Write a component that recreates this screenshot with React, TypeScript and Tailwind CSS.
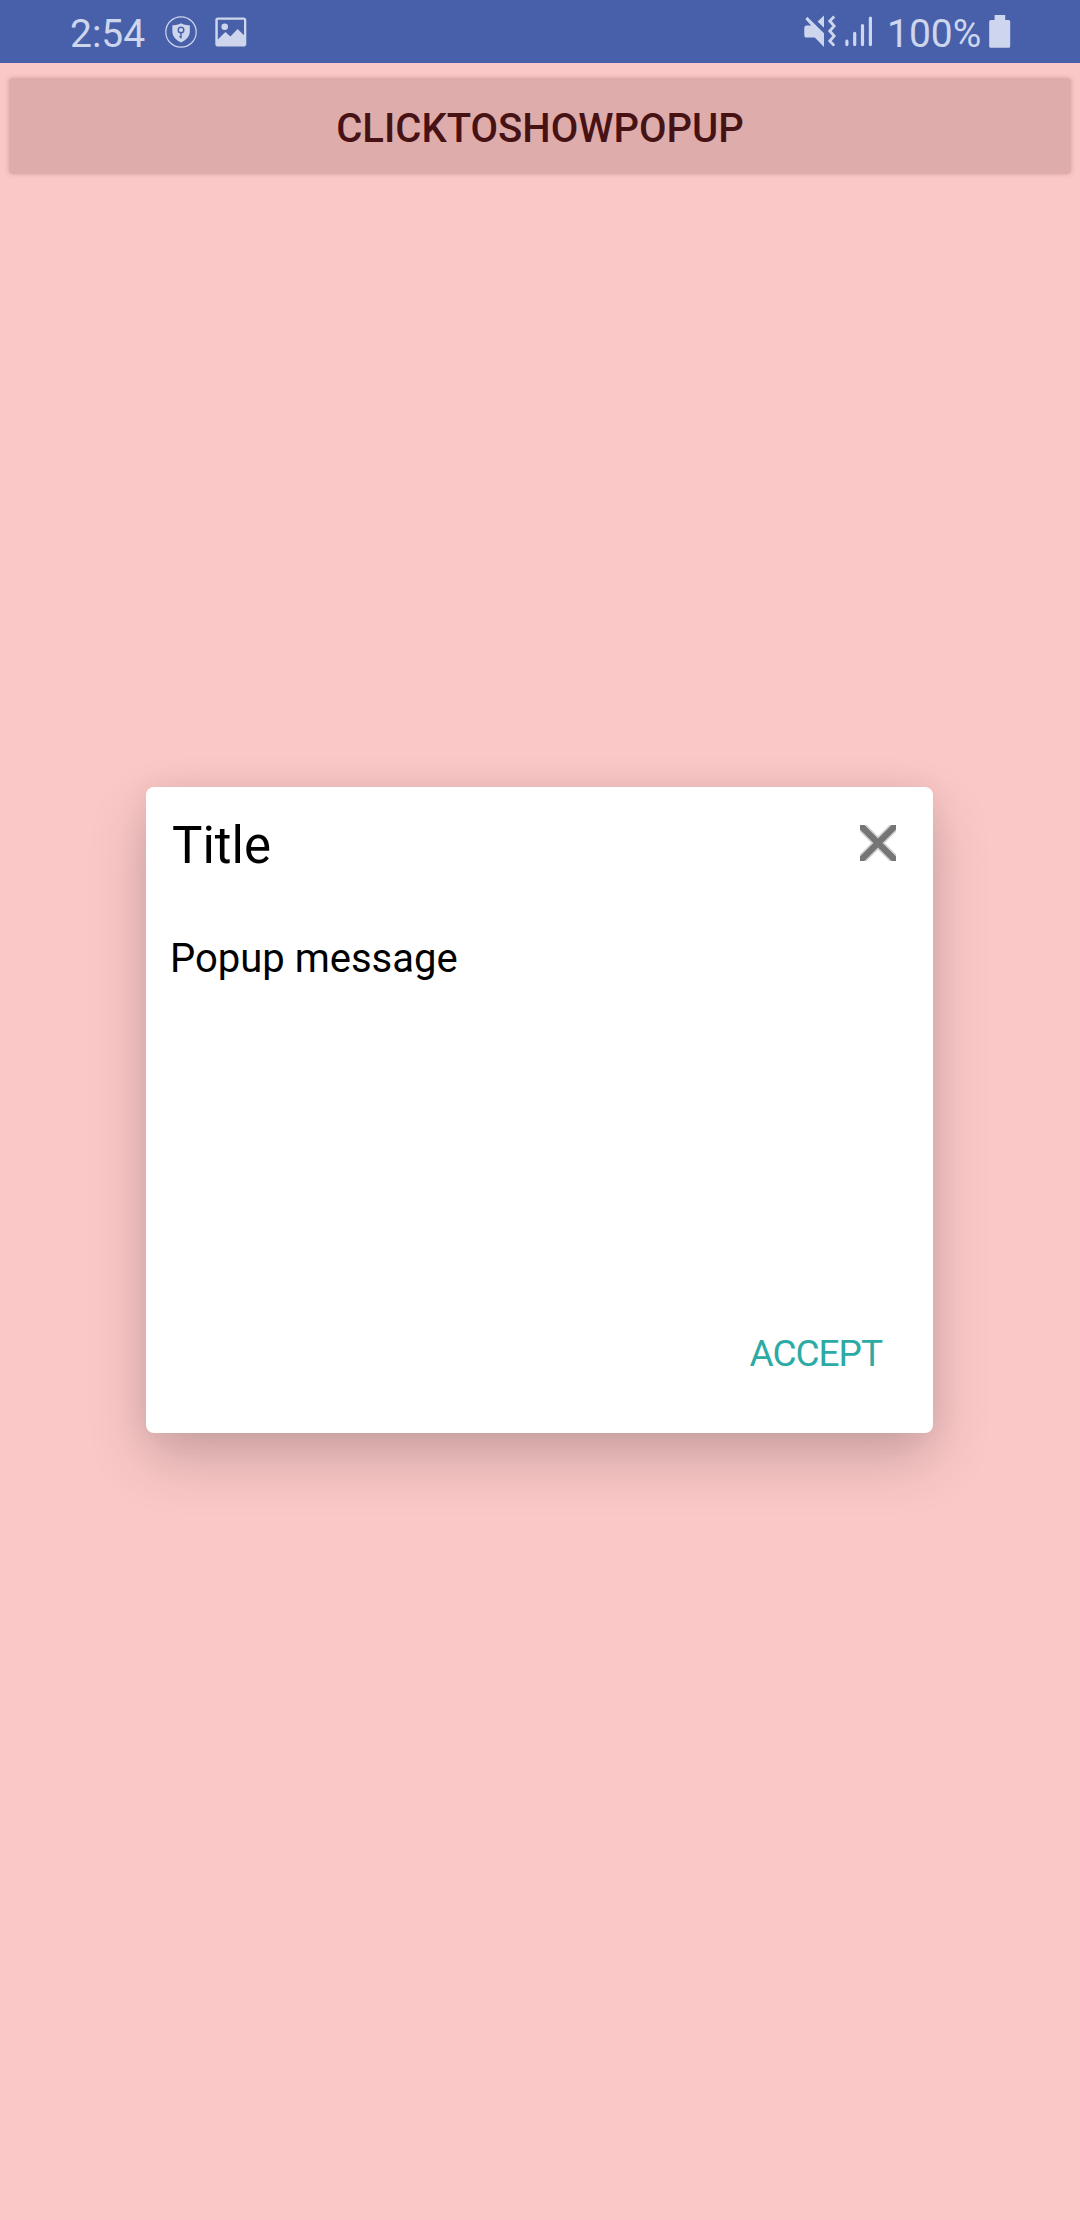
const ICON = '#ced6ed';

function ShieldIcon() {
  return (
    <svg width="32" height="32" viewBox="0 0 32 32" className="ml-[21px] mt-[15.5px]">
      <circle cx="16" cy="16" r="15.2" fill="none" stroke={ICON} strokeWidth="1.2" />
      <path d="M16 7.2C13.6 8.6 10.6 9.2 7.4 9.2V15.4C7.4 20.4 11 24 16 26.4C21 24 24.8 20.4 24.8 15.4V9.2C21.4 9.2 18.4 8.6 16 7.2Z" fill={ICON} />
      <circle cx="16" cy="14" r="2.8" fill="none" stroke="#4760a9" strokeWidth="1.4" />
      <path d="M16 16.8V22.4M16 20.6H14.2" stroke="#4760a9" strokeWidth="1.4" fill="none" />
    </svg>
  );
}

function PictureIcon() {
  return (
    <svg width="32" height="30" viewBox="0 0 32 30" className="ml-[18px] mt-[16.5px]">
      <path
        fillRule="evenodd"
        fill={ICON}
        d="M3 0.5H28.5Q31.3 0.5 31.3 3.3V26.7Q31.3 29.5 28.5 29.5H3Q0.3 29.5 0.3 26.7V3.3Q0.3 0.5 3 0.5ZM2.8 2.8V22.5L10.4 15L15.4 19.4L22.6 12L29 18.2V2.8Z"
      />
      <circle cx="9.7" cy="9.8" r="3.3" fill={ICON} />
    </svg>
  );
}

function VibrateIcon() {
  return (
    <svg width="32" height="32" viewBox="0 0 32 32" className="mt-[15px]">
      <path d="M0.3 12.6Q0.3 10.4 2.5 10.4H7.2L1.4 4.2L3.2 1.8L20 18.2V32L10.8 22.6H2.5Q0.3 22.6 0.3 20.4Z" fill={ICON} />
      <path d="M20 0.6V12.8L13.6 6.4Z" fill={ICON} />
      <path d="M30.2 1.6L25.8 6L30.2 11L25.8 16L30.2 21L25.8 26L30.2 30.6" fill="none" stroke={ICON} strokeWidth="2.8" />
    </svg>
  );
}

function SignalIcon() {
  return (
    <svg width="28" height="31" viewBox="0 0 28 31" className="ml-[9px] mt-[16px]">
      <g stroke={ICON} strokeWidth="3.2" strokeLinecap="round">
        <path d="M1.9 25.2V28.6M9.7 17.4V28.6M17.5 9.5V28.6M25.4 2V28.6" />
      </g>
    </svg>
  );
}

function BatteryIcon() {
  return (
    <svg width="22" height="33" viewBox="0 0 22 33" className="mt-[15px]">
      <path d="M5.6 0H16.2V5H19.6Q21.2 5 21.2 6.6V31.2Q21.2 32.8 19.6 32.8H1.8Q0.2 32.8 0.2 31.2V6.6Q0.2 5 1.8 5H5.6Z" fill={ICON} />
    </svg>
  );
}

function StatusBar() {
  return (
    <header className="flex h-[63px] items-start bg-[#4760a9] pl-[70px] pr-[69px] text-[39px] leading-[68px] text-[#ced6ed]">
      <span className="w-[74px] whitespace-nowrap">2:54</span>
      <ShieldIcon />
      <PictureIcon />
      <div className="ml-auto flex items-start">
        <VibrateIcon />
        <SignalIcon />
        <span className="ml-[14px] mr-[9px] w-[93px] whitespace-nowrap">100%</span>
        <BatteryIcon />
      </div>
    </header>
  );
}

function Popup() {
  return (
    <section className="ml-[146px] mt-[613px] flex h-[646px] w-[787px] flex-col rounded-[8px] bg-white shadow-[0_26px_58px_rgba(0,0,0,0.19),0_0_30px_rgba(0,0,0,0.06)]">
      <div className="flex items-start justify-between pl-[26px] pr-[37px] pt-[28px]">
        <h1 className="pt-px text-[51px] leading-[60px] text-black">Title</h1>
        <button aria-label="Close" className="mt-[10px]">
          <svg width="36" height="36" viewBox="0 0 36 36">
            <path d="M-2 -2L38 38M38 -2L-2 38" stroke="#757575" strokeOpacity="0.35" strokeWidth="9.4" />
            <path d="M-2 -2L38 38M38 -2L-2 38" stroke="#757575" strokeWidth="6.2" />
          </svg>
        </button>
      </div>
      <p className="pl-[24px] pt-[59px] text-[40px] leading-[48px] text-black">Popup message</p>
      <button className="mb-[56px] mr-[51px] mt-auto self-end text-[37px] leading-[46px] tracking-[-1px] text-[#2caba5]">ACCEPT</button>
    </section>
  );
}

export default function App() {
  return (
    <main className="flex h-[2220px] w-[1080px] flex-col overflow-hidden bg-[#fac8c7] font-['Roboto',sans-serif]">
      <StatusBar />
      <button className="mx-[9px] mt-[15px] h-[96px] rounded-[4px] bg-[#dfacac] pt-[6px] text-[40px] font-medium leading-[48px] text-[#471214] shadow-[0_0_5px_rgba(120,50,50,0.25)]">
        CLICKTOSHOWPOPUP
      </button>
      <Popup />
    </main>
  );
}
